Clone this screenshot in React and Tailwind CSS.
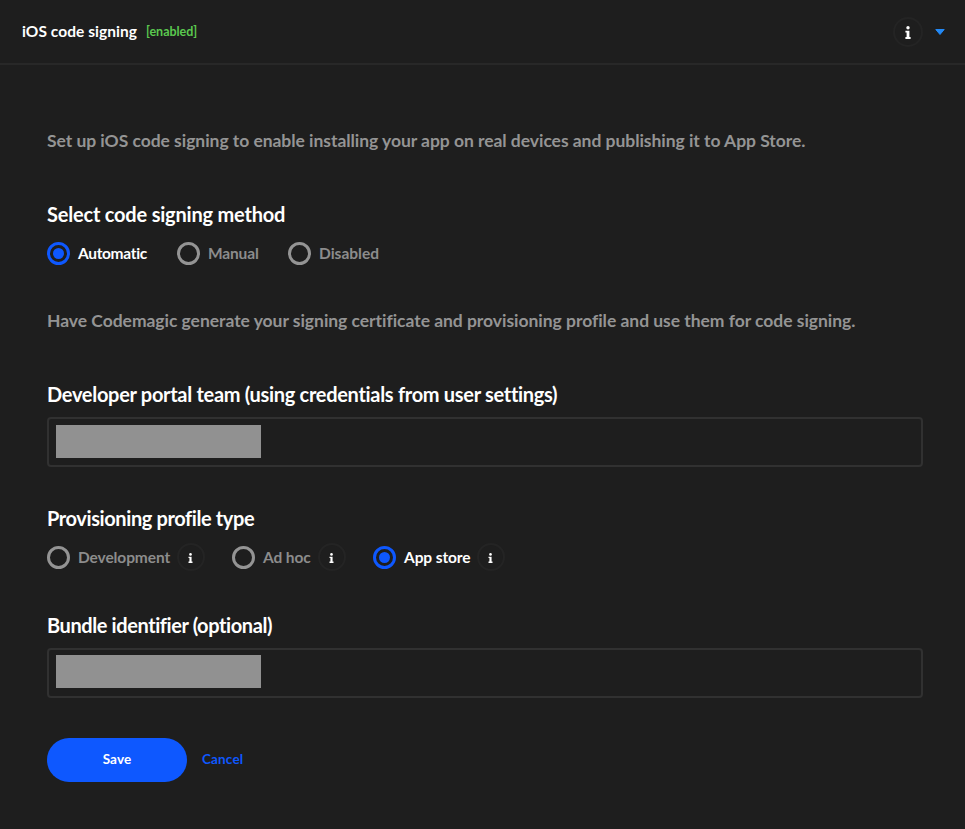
import React from "react";

function InfoBadge({ large = false }) {
  return (
    <span
      className={
        large
          ? "mt-px flex h-[30px] w-[30px] shrink-0 items-center justify-center rounded-full border-2 border-[#242424]"
          : "ml-[7px] flex h-7 w-7 shrink-0 items-center justify-center rounded-full border-2 border-[#242424]"
      }
    >
      <svg
        viewBox="0 0 6 13"
        className={large ? "h-[13px] w-[6px]" : "mt-px mr-px h-[10px] w-[5px]"}
        fill="#fff"
      >
        <circle cx="3" cy="1.8" r="1.7" />
        <path d="M.4 4.8h4v6.2H5.6v2H.4v-2h1.2V6.6H.4z" />
      </svg>
    </span>
  );
}

function Radio({ checked = false, label, width, info = false }) {
  return (
    <label className="flex h-7 items-center">
      <span
        className={
          checked
            ? "flex h-[23px] w-[23px] shrink-0 items-center justify-center rounded-full border-3 border-[#0e58ff]"
            : "h-[23px] w-[23px] shrink-0 rounded-full border-3 border-[#949494]"
        }
      >
        {checked && <span className="h-[11px] w-[11px] rounded-full bg-[#0e58ff]" />}
      </span>
      <span
        className={`ml-2 whitespace-nowrap text-[15.5px] leading-7 ${width} ${
          checked ? "text-white" : "text-[#8c8c8c]"
        }`}
      >
        {label}
      </span>
      {info && <InfoBadge />}
    </label>
  );
}

function Heading({ children, className }) {
  return (
    <h2 className={`h-7 whitespace-nowrap text-[20px] leading-7 text-white ${className}`}>
      {children}
    </h2>
  );
}

function Field({ inset = "pt-[5px]" }) {
  return (
    <div
      className={`flex h-[50px] w-[876px] items-start rounded-[4px] border-2 border-[#313131] pl-[7px] ${inset}`}
    >
      <div className="h-[33px] w-[205px] bg-[#919191]" />
    </div>
  );
}

export default function App() {
  return (
    <main className="flex h-[829px] w-[965px] flex-col overflow-hidden bg-[#1e1e1e] font-['Lato',sans-serif] font-bold">
      <header className="flex h-[65px] shrink-0 items-center border-b-2 border-[#282828] pl-[22px] pr-5">
        <h1 className="mb-[2px] w-[124px] whitespace-nowrap text-[15.5px] leading-6 tracking-[0.05px] text-white">
          iOS code signing
        </h1>
        <span className="whitespace-nowrap text-[12.5px] leading-6 tracking-[-0.03px] text-[#5bc94f]">
          [enabled]
        </span>
        <div className="ml-auto flex items-center gap-3">
          <InfoBadge large />
          <svg viewBox="0 0 10 6" className="h-[6px] w-[10px]" fill="#2389f5">
            <path d="M.8.5h8.4L5 5.5z" stroke="#2389f5" strokeLinejoin="round" />
          </svg>
        </div>
      </header>
      <section className="flex flex-col items-start pl-[47px]">
        <p className="mt-[62px] h-7 whitespace-nowrap text-[17.5px] leading-7 tracking-[-0.045px] text-[#949494]">
          Set up iOS code signing to enable installing your app on real devices and publishing it to App Store.
        </p>
        <Heading className="mt-[45px] tracking-[-0.2px]">Select code signing method</Heading>
        <div className="mt-[11px] flex">
          <Radio checked label="Automatic" width="w-[99px] tracking-[-0.33px]" />
          <Radio label="Manual" width="w-[80px] tracking-[-0.15px]" />
          <Radio label="Disabled" width="w-[62px]" />
        </div>
        <p className="mt-10 h-7 whitespace-nowrap text-[17.5px] leading-7 tracking-[-0.036px] text-[#949494]">
          Have Codemagic generate your signing certificate and provisioning profile and use them for code signing.
        </p>
        <Heading className="mt-[45px] mb-[9px] tracking-[-0.3px]">
          Developer portal team (using credentials from user settings)
        </Heading>
        <Field inset="pt-[6px]" />
        <Heading className="mt-[37px] tracking-[-0.4px]">Provisioning profile type</Heading>
        <div className="mt-[11px] flex">
          <div className="w-[185px]">
            <Radio label="Development" width="w-[92px] tracking-[-0.1px]" info />
          </div>
          <div className="w-[141px]">
            <Radio label="Ad hoc" width="w-[48px] tracking-[-0.1px]" info />
          </div>
          <Radio checked label="App store" width="w-[66px] tracking-[-0.1px]" info />
        </div>
        <Heading className="mt-10 mb-[9px] tracking-[-0.41px]">Bundle identifier (optional)</Heading>
        <Field />
        <div className="mt-10 flex items-center">
          <button className="h-11 w-[140px] rounded-full bg-[#0e58ff] pb-[2px] text-[13.5px] tracking-[0.15px] text-white">
            Save
          </button>
          <button className="ml-[15px] pb-[2px] text-[13.5px] tracking-[0.15px] text-[#0e58ff]">
            Cancel
          </button>
        </div>
      </section>
    </main>
  );
}
